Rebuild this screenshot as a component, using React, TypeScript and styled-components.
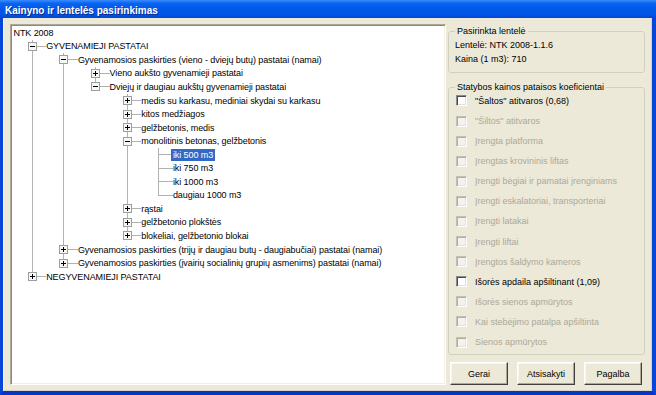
import styled, { createGlobalStyle } from "styled-components";

type NodeState = "open" | "closed" | "leaf";

interface ITreeNode {
  label: string;
  state: NodeState;
  selected?: boolean;
  children?: ITreeNode[];
}

interface IFlatRow {
  node: ITreeNode;
  guides: boolean[];
  last: boolean;
}

const closed = (label: string): ITreeNode => ({ label, state: "closed" });
const leaf = (label: string, selected = false): ITreeNode => ({ label, state: "leaf", selected });

const tree: ITreeNode[] = [
  {
    label: "GYVENAMIEJI PASTATAI",
    state: "open",
    children: [
      {
        label: "Gyvenamosios paskirties (vieno - dviejų butų) pastatai (namai)",
        state: "open",
        children: [
          closed("Vieno aukšto gyvenamieji pastatai"),
          {
            label: "Dviejų ir daugiau aukštų gyvenamieji pastatai",
            state: "open",
            children: [
              closed("medis su karkasu, mediniai skydai su karkasu"),
              closed("kitos medžiagos"),
              closed("gelžbetonis, medis"),
              {
                label: "monolitinis betonas, gelžbetonis",
                state: "open",
                children: [
                  leaf("iki 500 m3", true),
                  leaf("iki 750 m3"),
                  leaf("iki 1000 m3"),
                  leaf("daugiau 1000 m3"),
                ],
              },
              closed("rąstai"),
              closed("gelžbetonio plokštės"),
              closed("blokeliai, gelžbetonio blokai"),
            ],
          },
        ],
      },
      closed("Gyvenamosios paskirties (trijų ir daugiau butų - daugiabučiai) pastatai (namai)"),
      closed("Gyvenamosios paskirties (įvairių socialinių grupių asmenims) pastatai (namai)"),
    ],
  },
  closed("NEGYVENAMIEJI PASTATAI"),
];

const options = [
  { label: "\"Šaltos\" atitvaros (0,68)", enabled: true },
  { label: "\"Šiltos\" atitvaros", enabled: false },
  { label: "Įrengta platforma", enabled: false },
  { label: "Įrengtas krovininis liftas", enabled: false },
  { label: "Įrengti bėgiai ir pamatai įrenginiams", enabled: false },
  { label: "Įrengti eskalatoriai, transporteriai", enabled: false },
  { label: "Įrengti latakai", enabled: false },
  { label: "Įrengti liftai", enabled: false },
  { label: "Įrengtos šaldymo kameros", enabled: false },
  { label: "Išorės apdaila apšiltinant (1,09)", enabled: true },
  { label: "Išorės sienos apmūrytos", enabled: false },
  { label: "Kai stebėjimo patalpa apšiltinta", enabled: false },
  { label: "Sienos apmūrytos", enabled: false },
];

const flatten = (nodes: ITreeNode[], guides: boolean[], out: IFlatRow[]) => {
  nodes.forEach((node, i) => {
    const last = i === nodes.length - 1;
    out.push({ node, guides, last });
    if (node.state === "open" && node.children) {
      flatten(node.children, [...guides, !last], out);
    }
  });
  return out;
};

const GlobalStyle = createGlobalStyle`
  html, body {
    margin: 0;
    padding: 0;
    background: #ece9d8;
  }
  body {
    font-family: "Liberation Sans", Arial, sans-serif;
  }
`;

const Window = styled.div`
  width: 656px;
  height: 395px;
  display: flex;
  flex-direction: column;
  overflow: hidden;
`;

const TitleBar = styled.div`
  height: 18px;
  flex-shrink: 0;
  display: flex;
  align-items: flex-end;
  padding: 0 0 1px 5px;
  box-sizing: border-box;
  background: linear-gradient(
    to bottom,
    #3a8cff 0%,
    #0a64f0 18%,
    #0058e8 50%,
    #0056e6 80%,
    #0046d0 100%
  );
  color: #fff;
  font-size: 10px;
  font-weight: bold;
  line-height: 13px;
  text-shadow: 1px 1px 0 #0b2a8c;
`;

const Body = styled.div`
  flex: 1;
  display: flex;
  gap: 2px;
  padding: 6px 7px 6px 7px;
  background: #ece9d8;
  border-left: 3px solid #0845d8;
  border-right: 4px solid #0845d8;
  border-bottom: 4px solid #0735c4;
  box-shadow: inset 1px 0 0 #f7f5ec, inset -1px -1px 0 #d8d4c4;
  min-height: 0;
`;

const TreePanel = styled.div`
  width: 436px;
  box-sizing: border-box;
  background: #fff;
  border-top: 1px solid #aca899;
  border-left: 1px solid #aca899;
  border-right: 1px solid #fff;
  border-bottom: 1px solid #fff;
  box-shadow: inset 1px 1px 0 #8d8a7c, inset -1px -1px 0 #f1efe2;
  padding: 1px 0 0 3.5px;
  overflow: hidden;
  font-size: 9px;
  letter-spacing: -0.08px;
`;

const Row = styled.div`
  display: flex;
  align-items: center;
  height: 13.55px;
`;

const lineColor = "#b2b2b2";

const Guide = styled.div<{ $line: boolean }>`
  width: 31.7px;
  flex-shrink: 0;
  align-self: stretch;
  background: ${(p) =>
    p.$line ? `linear-gradient(${lineColor}, ${lineColor}) 17px 0 / 1px 100% no-repeat` : "none"};
`;

const Connector = styled.div<{ $last: boolean }>`
  width: 31.7px;
  flex-shrink: 0;
  align-self: stretch;
  display: flex;
  align-items: center;
  padding-left: 13px;
  box-sizing: border-box;
  background:
    linear-gradient(${lineColor}, ${lineColor}) 17px 0 / 1px ${(p) => (p.$last ? "50%" : "100%")} no-repeat,
    linear-gradient(${lineColor}, ${lineColor}) 17px 50% / 100% 1px no-repeat;
`;

const Label = styled.span<{ $selected?: boolean; $root?: boolean }>`
  margin-left: ${(p) => (p.$root ? "-3px" : "-2px")};
  padding: 0 2px;
  height: 12px;
  line-height: 12px;
  white-space: nowrap;
  color: ${(p) => (p.$selected ? "#fff" : "#000")};
  background: ${(p) => (p.$selected ? "#316ac5" : "transparent")};
`;

const SideColumn = styled.div`
  width: 197px;
  display: flex;
  flex-direction: column;
  padding-top: 2px;
  font-size: 9px;
`;

const Group = styled.fieldset<{ $height: number; $gap?: number }>`
  margin: ${(p) => p.$gap ?? 0}px 0 0 0;
  padding: 0 6px;
  height: ${(p) => p.$height}px;
  box-sizing: border-box;
  min-inline-size: 0;
  border: 1px solid #d0d0bf;
  border-radius: 3px;
`;

const Legend = styled.legend`
  padding: 0 2px;
  font-size: 9px;
  line-height: 11px;
  color: #000;
`;

const InfoLine = styled.div`
  line-height: 14px;
  color: #000;
  &:first-of-type {
    margin-top: 1px;
  }
`;

const OptionList = styled.div`
  margin-top: -2px;
  display: flex;
  flex-direction: column;
`;

const OptionRow = styled.label<{ $enabled: boolean }>`
  height: 20.1px;
  display: flex;
  align-items: center;
  gap: 8px;
  padding-left: 1px;
  white-space: nowrap;
  color: ${(p) => (p.$enabled ? "#000" : "#aca899")};
`;

const CheckBox = styled.span<{ $enabled: boolean }>`
  width: 11px;
  height: 11px;
  box-sizing: border-box;
  flex-shrink: 0;
  border-top: 1px solid ${(p) => (p.$enabled ? "#8a8a8a" : "#c2c0b6")};
  border-left: 1px solid ${(p) => (p.$enabled ? "#8a8a8a" : "#c2c0b6")};
  border-right: 1px solid #fff;
  border-bottom: 1px solid #fff;
  box-shadow: inset 1px 1px 0 ${(p) => (p.$enabled ? "#4a4a4a" : "#b0aea4")},
    inset -1px -1px 0 #e4e1d6;
  background: ${(p) => (p.$enabled ? "#fff" : "#f3f2ec")};
`;

const ButtonRow = styled.div`
  display: flex;
  gap: 9px;
  margin-top: 7px;
  padding-left: 2px;
`;

const Button = styled.button`
  width: 58px;
  height: 23px;
  padding: 0;
  font-family: "Liberation Sans", Arial, sans-serif;
  font-size: 9px;
  color: #000;
  background: #ece9d8;
  border-top: 1px solid #fff;
  border-left: 1px solid #fff;
  border-right: 1px solid #404040;
  border-bottom: 1px solid #404040;
  box-shadow: inset -1px -1px 0 #aca899, inset 1px 1px 0 #f7f6f0;
`;

const Expander = ({ open }: { open: boolean }) => (
  <svg width="9" height="9" viewBox="0 0 9 9">
    <rect x="0.5" y="0.5" width="8" height="8" fill="#f7f7f4" stroke="#9aa0a0" />
    <path d="M2 4.5h5" stroke="#000" />
    {!open && <path d="M4.5 2v5" stroke="#000" />}
  </svg>
);

const App = () => {
  const rows = flatten(tree, [], []);
  return (
    <>
      <GlobalStyle />
      <Window>
        <TitleBar>Kainyno ir lentelės pasirinkimas</TitleBar>
        <Body>
          <TreePanel>
            <Row>
              <Label $root>NTK 2008</Label>
            </Row>
            {rows.map(({ node, guides, last }, i) => (
              <Row key={i}>
                {guides.map((g, j) => (
                  <Guide key={j} $line={g} />
                ))}
                <Connector $last={last}>
                  {node.state !== "leaf" && <Expander open={node.state === "open"} />}
                </Connector>
                <Label $selected={node.selected}>{node.label}</Label>
              </Row>
            ))}
          </TreePanel>
          <SideColumn>
            <Group $height={47}>
              <Legend>Pasirinkta lentelė</Legend>
              <InfoLine>Lentelė: NTK 2008-1.1.6</InfoLine>
              <InfoLine>Kaina (1 m3): 710</InfoLine>
            </Group>
            <Group $height={274} $gap={9}>
              <Legend>Statybos kainos pataisos koeficientai</Legend>
              <OptionList>
                {options.map((o) => (
                  <OptionRow key={o.label} $enabled={o.enabled}>
                    <CheckBox $enabled={o.enabled} />
                    {o.label}
                  </OptionRow>
                ))}
              </OptionList>
            </Group>
            <ButtonRow>
              <Button>Gerai</Button>
              <Button>Atsisakyti</Button>
              <Button>Pagalba</Button>
            </ButtonRow>
          </SideColumn>
        </Body>
      </Window>
    </>
  );
};

export default App;
